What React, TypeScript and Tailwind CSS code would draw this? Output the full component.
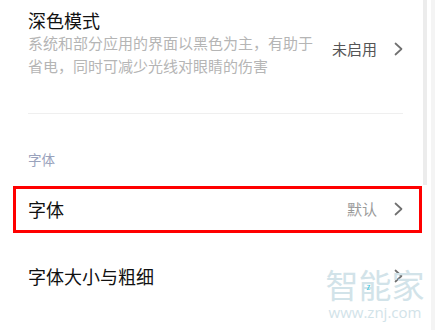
import React from "react";

const font = { fontFamily: '"Noto Sans CJK SC", "Noto Sans", sans-serif' };

function Chevron() {
  return (
    <svg width="9" height="14" viewBox="0 0 9 14" className="shrink-0">
      <path
        d="M1.5 1.5 L7.5 7 L1.5 12.5"
        fill="none"
        stroke="#707070"
        strokeWidth="1.7"
        strokeLinecap="round"
        strokeLinejoin="round"
      />
    </svg>
  );
}

export default function App() {
  return (
    <div
      className="relative w-[435px] h-[330px] overflow-hidden bg-white"
      style={font}
    >
      {/* 深色模式 */}
      <div className="flex items-start justify-between pl-[28px] pr-[32px] pt-[9px]">
        <div>
          <div className="text-[18px] leading-[22px] text-[#111]">深色模式</div>
          <div className="w-[290px] text-[15px] leading-[23px] text-[#b5b5b5]">
            系统和部分应用的界面以黑色为主，有助于省电，同时可减少光线对眼睛的伤害
          </div>
        </div>
        <div className="mt-[29px] flex items-center gap-[17px]">
          <span className="text-[15px] leading-[22px] text-[#555]">未启用</span>
          <Chevron />
        </div>
      </div>

      <div className="ml-[28px] mr-[32px] mt-[36px] h-[1px] bg-[#efefef]" />

      {/* 分组标题 */}
      <div className="pl-[28px] mt-[35px] text-[13.5px] leading-[20px] text-[#99a2bc]">
        字体
      </div>

      {/* 字体 (高亮框) */}
      <div className="ml-[13px] w-[409px] mt-[17px] h-[47px] border-[3px] border-[#ff0000] flex items-center justify-between pl-[12px] pr-[16px] pb-[2px]">
        <span className="text-[18px] leading-[24px] text-[#111]">字体</span>
        <div className="flex items-center gap-[17px]">
          <span className="text-[15px] leading-[22px] text-[#9a9a9a]">默认</span>
          <Chevron />
        </div>
      </div>

      {/* 字体大小与粗细 */}
      <div className="flex items-center justify-between pl-[28px] pr-[32px] mt-[31px]">
        <span className="text-[18px] leading-[24px] text-[#111]">
          字体大小与粗细
        </span>
        <Chevron />
      </div>

      {/* 滚动条 */}
      <div className="absolute left-[423px] top-0 w-[4px] h-[185px] bg-[#ececec]" />
      <div className="absolute left-[431px] top-0 w-[4px] h-full bg-[#f4f4f4]" />

      {/* 水印 */}
      <div className="absolute left-[324px] top-[264px] w-[102px] flex flex-col items-center pointer-events-none">
        <div className="relative text-[33px] leading-[40px] text-[#d2e3e9]">
          智能家
          <span className="absolute left-[41px] top-[19px] text-[8px] leading-[8px] text-[#3cc8e0]">
            z
          </span>
        </div>
        <div
          className="text-[15px] leading-[16px] text-[#d2e3e9]"
          style={{ fontFamily: '"Open Sans", sans-serif' }}
        >
          www.znj.com
        </div>
      </div>
    </div>
  );
}
